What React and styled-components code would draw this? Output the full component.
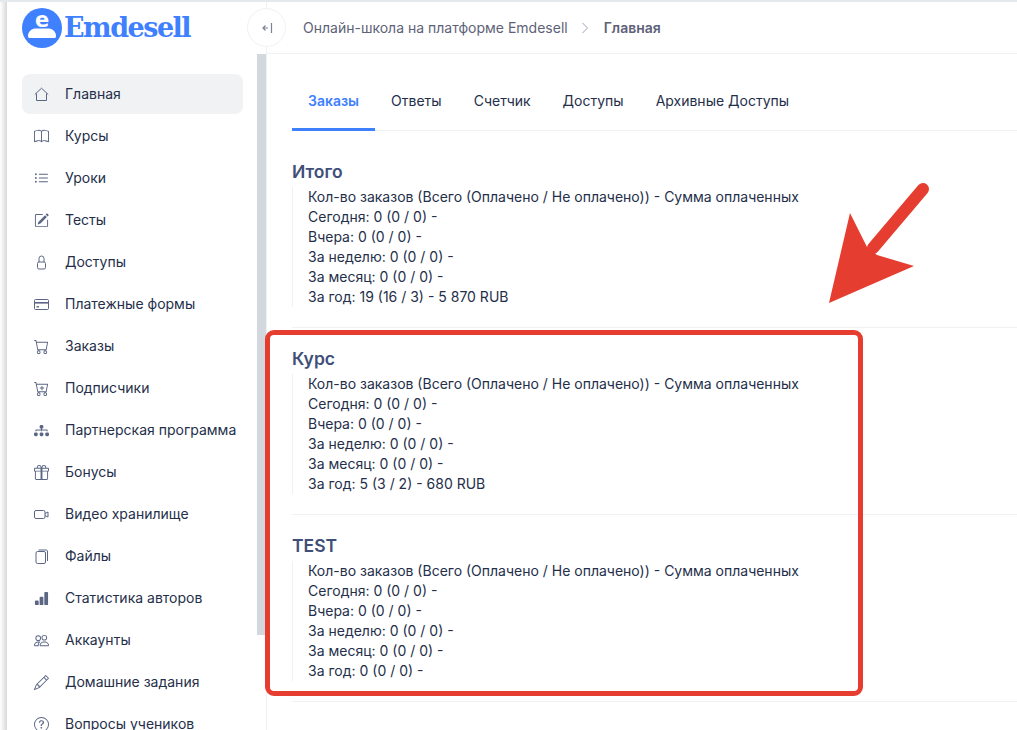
import styled, { createGlobalStyle } from 'styled-components';
import {
  BsBook, BsListUl, BsPencilSquare, BsCart, BsCartPlus,
  BsDiagram3Fill, BsGift, BsBarChartFill, BsPeople, BsPencil, BsQuestionCircle,
} from 'react-icons/bs';

const GlobalStyle = createGlobalStyle`
  html, body { margin: 0; padding: 0; background: #fff; }
  body { font-family: Inter, "Liberation Sans", sans-serif; font-size: 14px; }
  * { box-sizing: border-box; }
`;

const Page = styled.div`
  position: relative;
  display: flex;
  height: 100vh;
  overflow: hidden;
  border-top: 2px solid #e4e9ee;
`;

const EdgeShadow = styled.div`
  flex: 0 0 7px;
  background: linear-gradient(to right, #fff, #f4f4f4 30%, #d8d8d8);
`;

const Sidebar = styled.aside`
  position: relative;
  flex: 0 0 260px;
  display: flex;
  flex-direction: column;
  border-right: 1px solid #eff2f5;
  overflow: hidden;
`;

const LogoRow = styled.div`
  flex: 0 0 52px;
  display: flex;
  align-items: flex-start;
  gap: 2px;
  padding: 6px 0 0 15px;
`;

const LogoText = styled.span`
  font-family: "DejaVu Serif", serif;
  font-weight: 700;
  font-size: 27px;
  line-height: 40px;
  letter-spacing: -1.5px;
  color: #3f80ff;
`;

const Nav = styled.nav`
  display: flex;
  flex-direction: column;
  gap: 2px;
  padding: 20px 23px 0 15px;
`;

const NavItem = styled.div`
  flex: 0 0 40px;
  display: flex;
  align-items: center;
  gap: 16px;
  padding-left: 12px;
  border-radius: 8px;
  color: #252f4a;
  line-height: 20px;
  white-space: nowrap;
  background: ${(p) => (p.$active ? '#f1f2f4' : 'transparent')};
  svg { flex: 0 0 15px; color: #5b6684; }
`;

const ScrollThumb = styled.div`
  position: absolute;
  top: 52px;
  right: 0;
  width: 9px;
  height: 581px;
  background: #d3d7de;
`;

const Main = styled.main`
  flex: 1;
  min-width: 0;
  display: flex;
  flex-direction: column;
`;

const Header = styled.header`
  flex: 0 0 52px;
  display: flex;
  align-items: center;
  gap: 13.5px;
  padding: 0 0 0 36px;
  border-bottom: 1px solid #eff2f5;
  color: #5e6278;
`;

const Crumb = styled.span`
  font-weight: ${(p) => (p.$current ? 600 : 400)};
  white-space: nowrap;
`;

const ToggleButton = styled.div`
  position: absolute;
  left: 247px;
  top: 6px;
  width: 39px;
  height: 39px;
  display: flex;
  align-items: center;
  justify-content: center;
  border-radius: 50%;
  background: #fff;
  border: 1px solid #eff2f5;
`;

const Content = styled.div`
  padding: 26px 0 0 25px;
`;

const Tabs = styled.div`
  display: flex;
  margin-bottom: 10px;
  border-bottom: 1px solid #eff2f5;
`;

const Tab = styled.div`
  height: 51px;
  padding: 0 16px 8px;
  display: flex;
  align-items: center;
  white-space: nowrap;
  color: ${(p) => (p.$active ? '#3f80ff' : '#252f4a')};
  font-weight: ${(p) => (p.$active ? 600 : 400)};
  border-bottom: 3px solid ${(p) => (p.$active ? '#3f80ff' : 'transparent')};
  margin-bottom: -1px;
`;

const Section = styled.section`
  height: 187px;
  padding-top: 18px;
  border-bottom: 1px solid #eff2f5;
`;

const SectionTitle = styled.h3`
  margin: 0 0 3px;
  font-size: 17.5px;
  line-height: 25px;
  font-weight: 600;
  color: #3f4f78;
`;

const StatList = styled.div`
  padding-left: 15px;
  border-left: 1px solid #eff2f5;
  color: #252f4a;
  line-height: 20px;
`;

const RedFrame = styled.div`
  position: absolute;
  left: 265px;
  top: 328px;
  width: 598px;
  height: 366px;
  border: 5px solid #e53e30;
  border-radius: 9px;
  pointer-events: none;
`;

const ArrowMark = styled.svg`
  position: absolute;
  left: 820px;
  top: 174px;
`;

const Line = ({ children }) => (
  <svg width="15" height="15" viewBox="0 0 15 15" fill="none" stroke="currentColor" strokeWidth="1">
    {children}
  </svg>
);

const HouseIcon = () => (
  <Line><path d="M.8 7.500L7.500 1.200l6.700 6.300M2.500 6.500v7h10v-7" /></Line>
);
const LockIcon = () => (
  <Line><rect x="3.500" y="7" width="8" height="7" rx="1.500" /><path d="M5 7V3.500a2.500 2.500 0 0 1 5 0V7" /></Line>
);
const CardIcon = () => (
  <Line>
    <rect x=".5" y="2.500" width="14" height="10" rx="1" />
    <path d="M.5 5.800h14" strokeWidth="1.600" />
    <path d="M2.500 9.800h2.500" strokeWidth="1.400" />
  </Line>
);
const VideoIcon = () => (
  <Line>
    <rect x=".5" y="3.500" width="10.500" height="8" rx="1.500" />
    <path d="M11 6.500l3-1.500v5l-3-1.500" />
  </Line>
);
const FilesIcon = () => (
  <Line>
    <rect x="2" y="2.500" width="9.500" height="12" rx="1.500" />
    <path d="M4.500 1h8a1.500 1.500 0 0 1 1 1v10" />
  </Line>
);

const navItems = [
  [HouseIcon, 'Главная'],
  [BsBook, 'Курсы'],
  [BsListUl, 'Уроки'],
  [BsPencilSquare, 'Тесты'],
  [LockIcon, 'Доступы'],
  [CardIcon, 'Платежные формы'],
  [BsCart, 'Заказы'],
  [BsCartPlus, 'Подписчики'],
  [BsDiagram3Fill, 'Партнерская программа'],
  [BsGift, 'Бонусы'],
  [VideoIcon, 'Видео хранилище'],
  [FilesIcon, 'Файлы'],
  [BsBarChartFill, 'Статистика авторов'],
  [BsPeople, 'Аккаунты'],
  [BsPencil, 'Домашние задания'],
  [BsQuestionCircle, 'Вопросы учеников'],
];

const tabs = ['Заказы', 'Ответы', 'Счетчик', 'Доступы', 'Архивные Доступы'];

const sections = [
  { title: 'Итого', rows: ['0 (0 / 0) -', '0 (0 / 0) -', '0 (0 / 0) -', '0 (0 / 0) -', '19 (16 / 3) - 5 870 RUB'] },
  { title: 'Курс', rows: ['0 (0 / 0) -', '0 (0 / 0) -', '0 (0 / 0) -', '0 (0 / 0) -', '5 (3 / 2) - 680 RUB'] },
  { title: 'TEST', rows: ['0 (0 / 0) -', '0 (0 / 0) -', '0 (0 / 0) -', '0 (0 / 0) -', '0 (0 / 0) -'] },
];

const periods = ['Сегодня', 'Вчера', 'За неделю', 'За месяц', 'За год'];

function LogoMark() {
  return (
    <svg width="40" height="40" viewBox="0 0 40 40">
      <circle cx="20" cy="20" r="20" fill="#3f80ff" />
      <text x="20" y="19" textAnchor="middle" fontFamily="DejaVu Sans, sans-serif" fontWeight="700" fontSize="21" fill="#fff">e</text>
      <path d="M6 28c0-4 3-7 7-7.500h14c4 .5 7 3.500 7 7.500 0 1.400-.7 2-1.500 2h-25C6.700 30 6 29.400 6 28z" fill="#fff" />
    </svg>
  );
}

export default function App() {
  return (
    <Page>
      <GlobalStyle />
      <EdgeShadow />
      <Sidebar>
        <LogoRow>
          <LogoMark />
          <LogoText>Emdesell</LogoText>
        </LogoRow>
        <Nav>
          {navItems.map(([Icon, label], i) => (
            <NavItem key={label} $active={i === 0}>
              <Icon size={15} />
              {label}
            </NavItem>
          ))}
        </Nav>
        <ScrollThumb />
      </Sidebar>
      <Main>
        <Header>
          <Crumb>Онлайн-школа на платформе Emdesell</Crumb>
          <svg width="9" height="12" viewBox="0 0 9 12" fill="none" stroke="#a1a5b7" strokeWidth="1">
            <path d="M1.500 1l5 5-5 5" />
          </svg>
          <Crumb $current>Главная</Crumb>
        </Header>
        <Content>
          <Tabs>
            {tabs.map((t, i) => (
              <Tab key={t} $active={i === 0}>{t}</Tab>
            ))}
          </Tabs>
          {sections.map((s) => (
            <Section key={s.title}>
              <SectionTitle>{s.title}</SectionTitle>
              <StatList>
                <div>Кол-во заказов (Всего (Оплачено / Не оплачено)) - Сумма оплаченных</div>
                {periods.map((p, i) => (
                  <div key={p}>{p}: {s.rows[i]}</div>
                ))}
              </StatList>
            </Section>
          ))}
        </Content>
      </Main>
      <ToggleButton>
        <svg width="14" height="12" viewBox="0 0 14 12" fill="none" stroke="#7e8299" strokeWidth="1.200">
          <path d="M5.500 3.500L3 6l2.500 2.500M3 6h5M11.500 1v10" />
        </svg>
      </ToggleButton>
      <RedFrame />
      <ArrowMark width="120" height="140" viewBox="820 176 120 140">
        <path d="M923 189L873 248" stroke="#e53e30" strokeWidth="12" strokeLinecap="round" fill="none" />
        <path d="M829 303L850 213 867 247 877 255 914 266z" fill="#e53e30" />
      </ArrowMark>
    </Page>
  );
}
